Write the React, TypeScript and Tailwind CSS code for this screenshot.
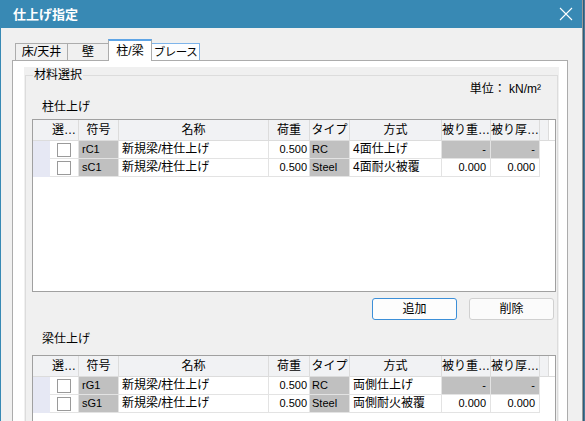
import React from "react";

type Row = {
  code: string;
  name: string;
  load: string;
  type: string;
  method: string;
  w: string;
  t: string;
};

const columnRows: Row[] = [
  { code: "rC1", name: "新規梁/柱仕上げ", load: "0.500", type: "RC", method: "4面仕上げ", w: "-", t: "-" },
  { code: "sC1", name: "新規梁/柱仕上げ", load: "0.500", type: "Steel", method: "4面耐火被覆", w: "0.000", t: "0.000" },
];

const beamRows: Row[] = [
  { code: "rG1", name: "新規梁/柱仕上げ", load: "0.500", type: "RC", method: "両側仕上げ", w: "-", t: "-" },
  { code: "sG1", name: "新規梁/柱仕上げ", load: "0.500", type: "Steel", method: "両側耐火被覆", w: "0.000", t: "0.000" },
];

const font = "font-['Liberation_Sans','Noto_Sans_CJK_JP',sans-serif]";

const Header = () => (
  <div className="flex h-[21px] bg-[#f1f2f4] border-b border-[#dcdcdc] text-[12px] leading-[20px] text-black whitespace-nowrap">
    <div className="w-[17px] shrink-0" />
    <div className="w-[29px] shrink-0 border-r border-[#dcdcdc] text-center">選…</div>
    <div className="w-[40px] shrink-0 border-r border-[#dcdcdc] text-center">符号</div>
    <div className="w-[150px] shrink-0 border-r border-[#dcdcdc] text-center">名称</div>
    <div className="w-[41px] shrink-0 border-r border-[#dcdcdc] text-center">荷重</div>
    <div className="w-[40px] shrink-0 border-r border-[#dcdcdc] text-center">タイプ</div>
    <div className="w-[92px] shrink-0 border-r border-[#dcdcdc] text-center">方式</div>
    <div className="w-[49px] shrink-0 border-r border-[#dcdcdc] text-center">被り重…</div>
    <div className="w-[49px] shrink-0 border-r border-[#dcdcdc] text-center">被り厚…</div>
    <div className="w-[9px] shrink-0 border-r border-[#dcdcdc]" />
    <div className="flex-1 bg-white" />
  </div>
);

const DataRow = ({ r }: { r: Row }) => {
  const dash = r.w === "-";
  return (
    <div className="flex h-[18px] text-[12px] leading-[17px] text-black whitespace-nowrap">
      <div className="w-[17px] shrink-0 bg-[#e6e8f4] border-b border-[#e6e8f4]" />
      <div className="w-[29px] shrink-0 border-r border-b border-[#e3e3e3] flex items-center justify-center">
        <div className="w-[14px] h-[14px] bg-white border border-[#9a9a9a]" />
      </div>
      <div className="w-[40px] shrink-0 border-r border-b border-[#e3e3e3] bg-[#c0c0c0] pl-[3px] text-[11px]">{r.code}</div>
      <div className="w-[150px] shrink-0 border-r border-b border-[#e3e3e3] pl-[3px]">{r.name}</div>
      <div className="w-[41px] shrink-0 border-r border-b border-[#e3e3e3] text-right pr-[2px] text-[11px]">{r.load}</div>
      <div className="w-[40px] shrink-0 border-r border-b border-[#e3e3e3] bg-[#c0c0c0] pl-[2px] text-[11px]">{r.type}</div>
      <div className="w-[92px] shrink-0 border-r border-b border-[#e3e3e3] pl-[3px]">{r.method}</div>
      <div className={`w-[49px] shrink-0 border-r border-b border-[#e3e3e3] text-right pr-[4px] text-[11px] ${dash ? "bg-[#c0c0c0]" : ""}`}>{r.w}</div>
      <div className={`w-[49px] shrink-0 border-r border-b border-[#e3e3e3] text-right pr-[4px] text-[11px] ${dash ? "bg-[#c0c0c0]" : ""}`}>{r.t}</div>
    </div>
  );
};

const Grid = ({ rows, height }: { rows: Row[]; height: string }) => (
  <div className={`${height} border border-[#a0a0a0] bg-white overflow-hidden shrink-0`}>
    <Header />
    {rows.map((r) => (
      <DataRow key={r.code} r={r} />
    ))}
  </div>
);

const Tab = ({ label, w }: { label: string; w: string }) => (
  <div className={`${w} h-[17px] border-t border-l border-r border-[#acacac] bg-[#f0f0f0] text-center text-[12px] leading-[16px] whitespace-nowrap`}>
    {label}
  </div>
);

export default function App() {
  return (
    <div className={`w-[585px] h-[421px] overflow-hidden flex bg-[#4b7896] ${font}`}>
      <div className="w-[583px] h-full flex flex-col border-l border-[#3889b4] border-r border-r-[#9a9a9a] bg-[#f0f0f0]">
        {/* title bar */}
        <div className="h-[28px] shrink-0 bg-[#3889b4] flex items-center justify-between pl-[12px] pr-[9px]">
          <span className="text-white font-bold text-[13px] leading-none">仕上げ指定</span>
          <svg width="14" height="14" viewBox="0 0 14 14" className="mb-[1px]">
            <path d="M1 1 L13 13 M13 1 L1 13" stroke="white" strokeWidth="1.1" />
          </svg>
        </div>

        {/* body */}
        <div className="flex-1 flex flex-col pt-[11px] pl-[11px] pr-[14px]">
          <div className="flex items-end h-[21px] pl-[3px]">
            <Tab label="床/天井" w="w-[53px]" />
            <Tab label="壁" w="w-[42px] -ml-px" />
            <div className="w-[44px] h-[22px] -ml-px -mb-px relative z-10 bg-white border-t-2 border-t-[#5fa5e6] border-l border-r border-[#acacac] text-center text-[12px] leading-[20px] whitespace-nowrap">
              柱/梁
            </div>
            <div className="w-[49px] h-[17px] -ml-px border-t border-l border-r border-[#7eb4ea] bg-[#fcfdff] text-center text-[11.5px] leading-[16px] whitespace-nowrap tracking-[-0.5px]">
              ブレース
            </div>
          </div>

          {/* tab page */}
          <div className="flex-1 flex flex-col bg-white border border-[#acacac] pt-[6px] pl-[11px] pr-[8px]">
            <div className="flex-1 flex flex-col bg-[#f0f0f0]">
              <fieldset className="flex-1 flex flex-col mx-[1px] border border-[#dcdcdc] min-w-0">
                <legend className="ml-[7px] px-[1px] text-[12px] leading-[16px] text-black">材料選択</legend>
                <div className="flex flex-col pl-[6px] pr-[1px]">
                  <div className="text-right text-[12px] leading-[12px] pr-[15px]">単位： kN/m²</div>
                  <div className="mt-[5px] pl-[10px] text-[12px] leading-[14px]">柱仕上げ</div>
                  <div className="mt-[5px]">
                    <Grid rows={columnRows} height="h-[173px]" />
                  </div>
                  <div className="mt-[6px] flex justify-end gap-[12px] pr-[2px]">
                    <button className="w-[85px] h-[22px] rounded-[3px] border border-[#3c8fd8] bg-[#fdfdfd] text-[12px] leading-[20px]">
                      追加
                    </button>
                    <button className="w-[85px] h-[22px] rounded-[3px] border border-[#d0d0d0] bg-[#fbfbfb] text-[12px] leading-[20px]">
                      削除
                    </button>
                  </div>
                  <div className="mt-[12px] pl-[10px] text-[12px] leading-[14px]">梁仕上げ</div>
                  <div className="mt-[9px]">
                    <Grid rows={beamRows} height="h-[120px]" />
                  </div>
                </div>
              </fieldset>
            </div>
          </div>
        </div>
      </div>
      <div className="w-[1px] h-full bg-[#2e5d7a]" />
    </div>
  );
}
